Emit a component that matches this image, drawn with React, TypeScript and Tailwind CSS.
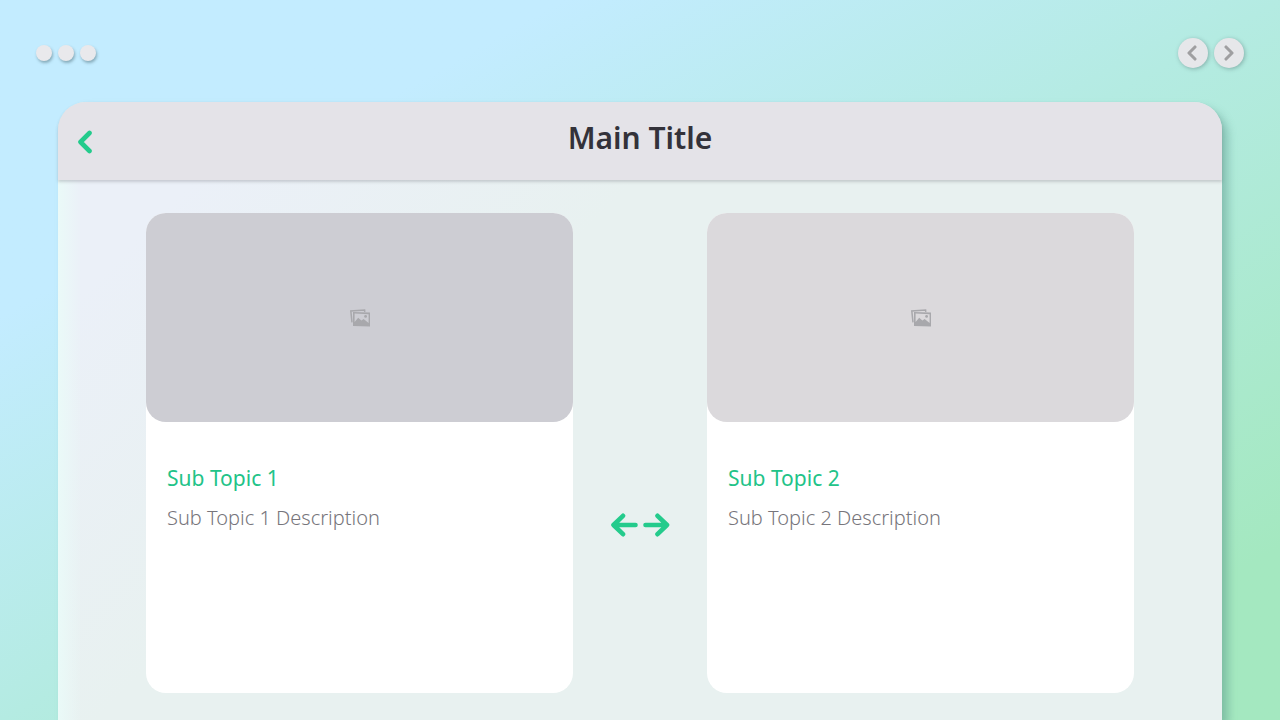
import { Fragment } from "react";

const topics = [
  {
    id: 1,
    title: "Sub Topic 1",
    description: "Sub Topic 1 Description",
    cover: "bg-[#cdcdd3]",
  },
  {
    id: 2,
    title: "Sub Topic 2",
    description: "Sub Topic 2 Description",
    cover: "bg-[#dbd9dc]",
  },
];

function Chevron({ className, flip }: { className: string; flip?: boolean }) {
  return (
    <svg
      viewBox="0 0 16 24"
      fill="none"
      stroke="currentColor"
      strokeWidth="4.6"
      strokeLinecap="round"
      strokeLinejoin="round"
      className={className}
      aria-hidden="true"
    >
      <path d={flip ? "M3.5 3L12.5 12L3.5 21" : "M12.5 3L3.5 12L12.5 21"} />
    </svg>
  );
}

function SwapArrows() {
  return (
    <svg
      viewBox="0 0 60 24"
      fill="none"
      stroke="#24cb8c"
      strokeWidth="4.6"
      strokeLinecap="round"
      strokeLinejoin="round"
      className="h-6 w-15"
      aria-hidden="true"
    >
      <path d="M13 2.8L3.5 12L13 21.2M4 12H25.5" />
      <path d="M47.5 2.8L57 12L47.5 21.2M56.5 12H35.5" />
    </svg>
  );
}

function PicturesIcon() {
  return (
    <svg viewBox="0 0 20 18" className="w-5 text-[#a8a8ac]" aria-hidden="true">
      <path
        d="M2 13.4L0.8 1.9L14.6 1L14.8 2.8"
        fill="none"
        stroke="currentColor"
        strokeWidth="1.5"
      />
      <path
        fillRule="evenodd"
        fill="currentColor"
        d="M3 3L20 3.6V17.6L3 17ZM4.6 4.5V13L8.2 8.8L11.4 11.6L13.6 10L18.6 14V5.2Z"
      />
      <circle cx="15.6" cy="7.4" r="1.4" fill="currentColor" />
    </svg>
  );
}

export default function App() {
  return (
    <div className="flex h-screen flex-col overflow-hidden bg-linear-to-br from-[#c3ecff] from-22% via-[#b4ebe2] via-50% to-[#a4e8c0] to-88% font-['Noto_Sans',sans-serif]">
      {/* top bar */}
      <div className="flex h-[102px] shrink-0 items-center justify-between px-9 pt-1">
        <div className="flex gap-1.5">
          {[0, 1, 2].map((dot) => (
            <span
              key={dot}
              className="size-4 rounded-full bg-[#e9e9ec] shadow-[1px_2px_3px_rgba(60,90,100,0.45)]"
            />
          ))}
        </div>
        <div className="flex gap-1.5">
          <button
            aria-label="Previous"
            className="flex size-[30px] items-center justify-center rounded-full bg-[#e6e7ea] pr-0.5 text-[#9f9fa1] shadow-[1px_1px_4px_rgba(60,90,90,0.4)]"
          >
            <Chevron className="h-4 w-3" />
          </button>
          <button
            aria-label="Next"
            className="flex size-[30px] items-center justify-center rounded-full bg-[#e6e7ea] text-[#9f9fa1] shadow-[1px_1px_4px_rgba(60,90,90,0.4)]"
          >
            <Chevron className="h-4 w-3" flip />
          </button>
        </div>
      </div>

      {/* window */}
      <main className="mx-[58px] flex flex-1 flex-col rounded-t-[28px] bg-[#e8f1f0] shadow-[6px_6px_8px_rgba(70,130,120,0.4)]">
        <header className="relative flex h-[78px] shrink-0 items-center justify-center rounded-t-[28px] bg-[#e4e3e8] pb-2 shadow-[0_2px_3px_rgba(90,90,100,0.25)]">
          <button
            aria-label="Back"
            className="absolute left-[19px] top-7 text-[#24cb8c]"
          >
            <Chevron className="h-6 w-4" />
          </button>
          <h1 className="text-[30px] font-semibold text-[#33323a]">
            Main Title
          </h1>
        </header>

        <div className="flex flex-1 bg-[linear-gradient(90deg,#eafaf8,#eafaf800_2%),linear-gradient(135deg,#ebf0f8_8%,#e8f1f0_34%)] px-[88px] pb-[27px] pt-[33px]">
          {topics.map((topic, index) => (
            <Fragment key={topic.id}>
              {index > 0 && (
                <div className="flex w-[134px] shrink-0 items-center justify-center pt-36">
                  <SwapArrows />
                </div>
              )}
              <article className="flex-1 rounded-[20px] bg-white">
                <div
                  className={`flex h-[209px] items-center justify-center rounded-[20px] ${topic.cover}`}
                >
                  <PicturesIcon />
                </div>
                <div className="px-[21px] pt-10">
                  <h2 className="text-[21px] leading-8 text-[#22c388]">
                    {topic.title}
                  </h2>
                  <p className="mt-2 text-[20px] font-light leading-8 text-[#77757b]">
                    {topic.description}
                  </p>
                </div>
              </article>
            </Fragment>
          ))}
        </div>
      </main>
    </div>
  );
}
